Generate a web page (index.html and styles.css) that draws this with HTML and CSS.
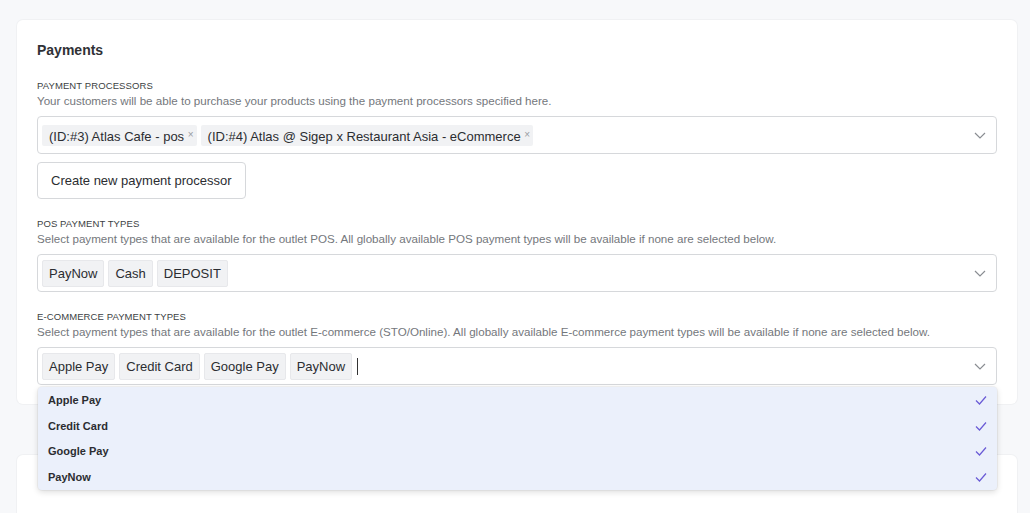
FILE: index.html
```html
<!DOCTYPE html>
<html lang="en">
<head>
    <meta charset="UTF-8">
    <meta name="viewport" content="width=device-width, initial-scale=1.0">
    <link rel="stylesheet" href="styles.css">
    <title>Outlet settings - Payments</title>
</head>
<body>

    <div class="card">
        <h2 class="card-title">Payments</h2>

        <!-- Procesadores de pago -->
        <div class="field">
            <div class="field-label">Payment processors</div>
            <div class="field-help">Your customers will be able to purchase your products using the payment processors specified here.</div>
            <div class="select">
                <div class="select-values">
                    <span class="chip">(ID:#3) Atlas Cafe - pos <span class="chip-remove">&times;</span></span>
                    <span class="chip">(ID:#4) Atlas @ Sigep x Restaurant Asia - eCommerce <span class="chip-remove">&times;</span></span>
                </div>
                <svg class="chevron" width="14" height="14" viewBox="0 0 14 14"><path d="M2 5 L7 10 L12 5" fill="none" stroke="#8a8d92" stroke-width="1.2"/></svg>
            </div>
            <button class="btn">Create new payment processor</button>
        </div>

        <!-- Tipos de pago POS -->
        <div class="field">
            <div class="field-label">POS payment types</div>
            <div class="field-help">Select payment types that are available for the outlet POS. All globally available POS payment types will be available if none are selected below.</div>
            <div class="select">
                <div class="select-values">
                    <span class="tag">PayNow</span>
                    <span class="tag">Cash</span>
                    <span class="tag">DEPOSIT</span>
                </div>
                <svg class="chevron" width="14" height="14" viewBox="0 0 14 14"><path d="M2 5 L7 10 L12 5" fill="none" stroke="#8a8d92" stroke-width="1.2"/></svg>
            </div>
        </div>

        <!-- Tipos de pago e-commerce -->
        <div class="field">
            <div class="field-label">E-commerce payment types</div>
            <div class="field-help">Select payment types that are available for the outlet E-commerce (STO/Online). All globally available E-commerce payment types will be available if none are selected below.</div>
            <div class="select-wrap">
                <div class="select">
                    <div class="select-values">
                        <span class="tag">Apple Pay</span>
                        <span class="tag">Credit Card</span>
                        <span class="tag">Google Pay</span>
                        <span class="tag">PayNow</span>
                        <span class="caret"></span>
                    </div>
                    <svg class="chevron" width="14" height="14" viewBox="0 0 14 14"><path d="M2 5 L7 10 L12 5" fill="none" stroke="#8a8d92" stroke-width="1.2"/></svg>
                </div>
                <ul class="menu">
                    <li class="menu-item">Apple Pay <svg class="check" width="14" height="14" viewBox="0 0 14 14"><path d="M2 7.5 L5.5 11 L12 3.5" fill="none" stroke="#6a5bd6" stroke-width="1.2"/></svg></li>
                    <li class="menu-item">Credit Card <svg class="check" width="14" height="14" viewBox="0 0 14 14"><path d="M2 7.5 L5.5 11 L12 3.5" fill="none" stroke="#6a5bd6" stroke-width="1.2"/></svg></li>
                    <li class="menu-item">Google Pay <svg class="check" width="14" height="14" viewBox="0 0 14 14"><path d="M2 7.5 L5.5 11 L12 3.5" fill="none" stroke="#6a5bd6" stroke-width="1.2"/></svg></li>
                    <li class="menu-item">PayNow <svg class="check" width="14" height="14" viewBox="0 0 14 14"><path d="M2 7.5 L5.5 11 L12 3.5" fill="none" stroke="#6a5bd6" stroke-width="1.2"/></svg></li>
                </ul>
            </div>
        </div>
    </div>

    <div class="card card-next"></div>

</body>
</html>
```

FILE: styles.css
```css
body {
    margin: 0;
    padding: 20px 13px 0 17px;
    background-color: #f7f8fa;
    font-family: "Liberation Sans", Arial, sans-serif;
    color: #2b2d31;
    overflow: hidden;
}

.card {
    background-color: #ffffff;
    border-radius: 6px;
    padding: 20px 20px 19px 20px;
    box-shadow: 0 0 0 1px #f0f1f3;
}

.card-next {
    margin-top: 51px;
    height: 80px;
}

.card-title {
    margin: 0;
    font-size: 14px;
    line-height: 20px;
    font-weight: bold;
    color: #2f3136;
}

.field {
    margin-top: 19px;
}

.field + .field {
    margin-top: 18px;
}

.field-label {
    font-size: 9.5px;
    line-height: 14px;
    text-transform: uppercase;
    letter-spacing: 0.1px;
    color: #3c3f44;
}

.field-help {
    font-size: 11.6px;
    line-height: 16px;
    color: #74777c;
}

.select-wrap {
    position: relative;
}

.select {
    margin-top: 7px;
    height: 38px;
    box-sizing: border-box;
    border: 1px solid #d6d8db;
    border-radius: 4px;
    background-color: #ffffff;
    display: flex;
    align-items: center;
    padding: 0 9px 0 4px;
}

.select-values {
    flex: 1;
    display: flex;
    align-items: center;
    gap: 4px;
}

.chevron {
    flex: none;
}

/* etiquetas de procesadores (con boton para quitar) */
.chip {
    background-color: #f1f2f4;
    border-radius: 2px;
    font-size: 13px;
    line-height: 19px;
    padding: 0 3px 0 7px;
    color: #2b2d31;
}

.chip-remove {
    font-size: 10px;
    color: #9a9da2;
    vertical-align: 3px;
}

/* etiquetas de tipos de pago */
.tag {
    background-color: #f1f2f4;
    border: 1px solid #e7e8eb;
    border-radius: 2px;
    font-size: 13px;
    line-height: 25px;
    padding: 0 6px;
    color: #2b2d31;
}

.caret {
    width: 1px;
    height: 17px;
    background-color: #333;
    margin-left: 1px;
}

.btn {
    display: block;
    margin-top: 8px;
    height: 37px;
    padding: 0 13px;
    background-color: #ffffff;
    border: 1px solid #d6d8db;
    border-radius: 4px;
    font-family: inherit;
    font-size: 13px;
    color: #2b2d31;
}

/* menu desplegable abierto */
.menu {
    position: absolute;
    top: 40px;
    left: 1px;
    right: 0;
    margin: 0;
    padding: 0;
    list-style: none;
    background-color: #ebf0fb;
    border-radius: 4px;
    box-shadow: 0 2px 6px rgba(0, 0, 0, 0.14), 0 0 0 1px rgba(0, 0, 0, 0.04);
    z-index: 2;
}

.menu-item {
    height: 25.75px;
    display: flex;
    align-items: center;
    justify-content: space-between;
    padding: 0 9px 0 10px;
    font-size: 11px;
    font-weight: bold;
    color: #2b2d31;
}
```
